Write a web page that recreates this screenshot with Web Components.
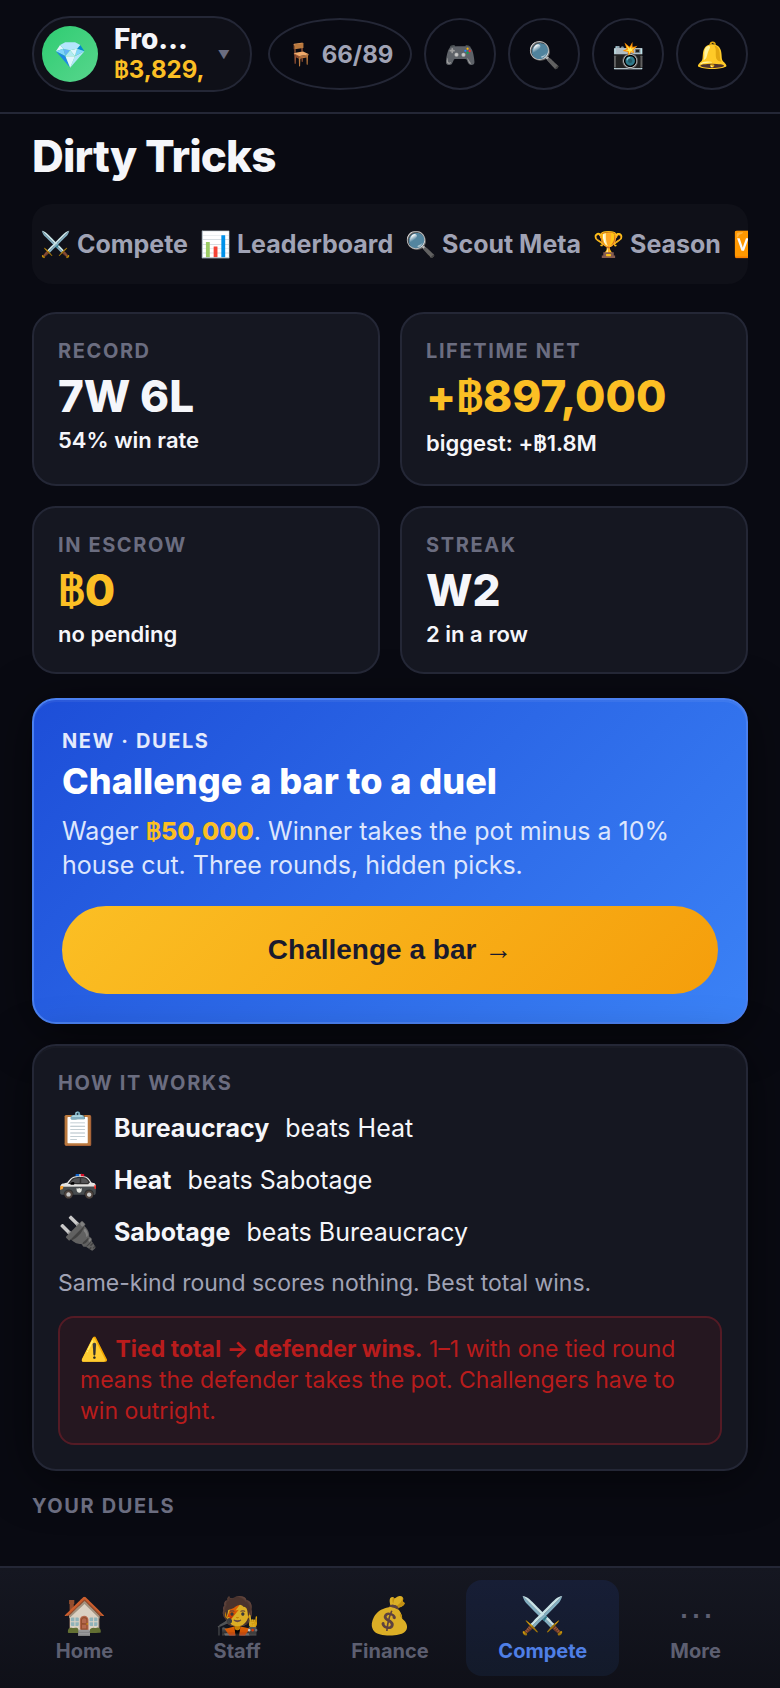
<!DOCTYPE html>
<html lang="en">
<head>
  <meta charset="UTF-8">
  <meta name="viewport" content="width=device-width,initial-scale=1">
  <title>Dirty Tricks</title>
  <style>
    :root {
      --bg: #090a12;
      --card: #151721;
      --line: #242736;
      --text: #f5f6fa;
      --soft: #a0a3b5;
      --muted: #6b6d80;
      --gold: #fbbf24;
    }

    body {
      margin: 0;
      background: var(--bg);
      color: var(--text);
      font-family: Inter, "Liberation Sans", sans-serif;
      font-size: 25px;
    }
  </style>
</head>
<body>
  <bar-app>
    <top-bar slot="top" name="Fro…" cash="฿3,829," seats="66/89"></top-bar>

    <h1 slot="title">Dirty Tricks</h1>
    <tab-strip>
      <a href="#compete">⚔️ Compete</a>
      <a href="#leaderboard">📊 Leaderboard</a>
      <a href="#scout">🔍 Scout Meta</a>
      <a href="#season">🏆 Season</a>
      <a href="#versus">🆚</a>
    </tab-strip>

    <stat-grid>
      <stat-card label="Record" value="7W 6L" sub="54% win rate"></stat-card>
      <stat-card label="Lifetime net" value="+฿897,000" sub="biggest: +฿1.8M" gold></stat-card>
      <stat-card label="In escrow" value="฿0" sub="no pending" gold></stat-card>
      <stat-card label="Streak" value="W2" sub="2 in a row"></stat-card>
    </stat-grid>

    <duel-card>
      <span slot="label">New · Duels</span>
      <span slot="title">Challenge a bar to a duel</span>
      Wager <b><baht-sign>฿</baht-sign>50,000</b>. Winner takes the pot minus a 10% house cut. Three rounds, hidden picks.
      <span slot="action">Challenge a bar →</span>
    </duel-card>

    <rules-card>
      <rule-row icon="📋" kind="Bureaucracy">beats Heat</rule-row>
      <rule-row icon="🚓" kind="Heat">beats Sabotage</rule-row>
      <rule-row icon="🔌" kind="Sabotage">beats Bureaucracy</rule-row>
      <span slot="note">Same-kind round scores nothing. Best total wins.</span>
      <span slot="warning">⚠️ <b>Tied total → defender wins.</b> 1–1 with one tied round means the defender takes the pot. Challengers have to win outright.</span>
    </rules-card>

    <section-label>Your duels</section-label>

    <bottom-nav slot="nav">
      <nav-item icon="🏠" href="#home">Home</nav-item>
      <nav-item icon="🧑‍🎤" href="#staff">Staff</nav-item>
      <nav-item icon="💰" href="#finance">Finance</nav-item>
      <nav-item icon="⚔️" href="#compete" active>Compete</nav-item>
      <nav-item icon="⋯" href="#more">More</nav-item>
    </bottom-nav>
  </bar-app>

  <script>
    // Small helper: registers an element whose shadow root comes from a string
    const define = (name, render) => {
      customElements.define(name, class extends HTMLElement {
        constructor() {
          super()
          this.attachShadow({ mode: "open" })
        }

        connectedCallback() {
          this.shadowRoot.innerHTML = render(this)
        }
      })
    }

    const attr = (el, name) => el.getAttribute(name) || ""
    const money = (el, name) => attr(el, name).replace("฿", "<baht-sign>฿</baht-sign>")

    // The currency sign is set in a Thai face, narrower than Inter's own.
    // Kept on one line: it is inline, so a line break would show as a space.
    define("baht-sign", () => `<style>:host { font-family: Loma, "Noto Sans", sans-serif }</style><slot></slot>`)

    define("bar-app", () => `
      <style>
        :host {
          display: flex;
          flex-direction: column;
          min-height: 100vh;
        }
        main {
          flex: 1;
          padding: 16px 32px 24px;
        }
        ::slotted(h1) {
          margin: 0 0 22px;
          font-size: 44px;
          font-weight: 800;
          line-height: 52px;
          letter-spacing: -0.02em;
        }
      </style>
      <slot name="top"></slot>
      <main><slot name="title"></slot><slot></slot></main>
      <slot name="nav"></slot>
    `)

    define("top-bar", el => `
      <style>
        :host {
          display: flex;
          align-items: center;
          gap: 12px;
          padding: 16px 32px 20px;
          border-bottom: 2px solid var(--line);
        }
        button {
          box-sizing: border-box;
          flex: none;
          margin: 0;
          border: 2px solid var(--line);
          background: none;
          color: inherit;
          font: inherit;
        }
        .profile {
          display: flex;
          flex: 1;
          align-items: center;
          gap: 16px;
          height: 76px;
          min-width: 0;
          margin-right: 4px;
          padding: 0 20px 0 8px;
          border-radius: 38px;
          background: #0f1018;
          text-align: left;
        }
        .avatar {
          display: grid;
          flex: none;
          place-items: center;
          width: 56px;
          height: 56px;
          border-radius: 50%;
          background: linear-gradient(135deg, #2ecc71, #58d68d);
          font-size: 26px;
        }
        .who {
          flex: 1;
          min-width: 0;
          white-space: nowrap;
        }
        .name {
          font-size: 28px;
          font-weight: 800;
          line-height: 32px;
        }
        .cash {
          color: var(--gold);
          font-size: 24px;
          font-weight: 700;
          line-height: 30px;
        }
        .caret {
          color: var(--muted);
          font-size: 12px;
        }
        .seats {
          display: flex;
          align-items: center;
          justify-content: center;
          gap: 8px;
          width: 144px;
          height: 72px;
          padding: 0;
          border-radius: 50%;
          color: var(--soft);
          font-size: 24px;
          font-weight: 700;
        }
        .chair {
          font-size: 22px;
        }
        .round {
          width: 72px;
          height: 72px;
          padding: 0;
          border-radius: 50%;
          font-size: 26px;
        }
      </style>
      <button class="profile">
        <span class="avatar">💎</span>
        <span class="who">
          <div class="name">${attr(el, "name")}</div>
          <div class="cash">${money(el, "cash")}</div>
        </span>
        <span class="caret">▼</span>
      </button>
      <button class="seats"><span class="chair">🪑</span><span>${attr(el, "seats")}</span></button>
      <button class="round" aria-label="Games">🎮</button>
      <button class="round" aria-label="Search">🔍</button>
      <button class="round" aria-label="Snapshot">📸</button>
      <button class="round" aria-label="Alerts">🔔</button>
    `)

    define("tab-strip", () => `
      <style>
        :host {
          display: flex;
          align-items: center;
          gap: 12px;
          box-sizing: border-box;
          height: 80px;
          margin-bottom: 28px;
          padding: 0 8px;
          overflow: hidden;
          border-radius: 20px;
          background: #0f1018;
        }
        ::slotted(a) {
          flex: none;
          color: var(--soft);
          font-weight: 700;
          text-decoration: none;
          white-space: nowrap;
        }
      </style>
      <slot></slot>
    `)

    define("section-label", () => `
      <style>
        :host {
          display: block;
          color: var(--muted);
          font-size: 20px;
          font-weight: 700;
          line-height: 26px;
          letter-spacing: 0.08em;
          text-transform: uppercase;
        }
      </style>
      <slot></slot>
    `)

    define("stat-grid", () => `
      <style>
        :host {
          display: grid;
          grid-template-columns: 1fr 1fr;
          gap: 20px;
          margin-bottom: 24px;
        }
      </style>
      <slot></slot>
    `)

    define("stat-card", el => `
      <style>
        :host {
          padding: 24px;
          border: 2px solid var(--line);
          border-radius: 24px;
          background: var(--card);
        }
        .value {
          margin: 6px 0 4px;
          font-size: 44px;
          font-weight: 800;
          line-height: 53px;
        }
        :host([gold]) .value { color: var(--gold) }
        .sub {
          font-size: 22px;
          font-weight: 600;
          line-height: 27px;
        }
        .sub baht-sign { line-height: 33px }
      </style>
      <section-label>${attr(el, "label")}</section-label>
      <div class="value">${money(el, "value")}</div>
      <div class="sub">${money(el, "sub")}</div>
    `)

    define("duel-card", () => `
      <style>
        :host {
          display: block;
          margin-bottom: 20px;
          padding: 28px;
          border: 2px solid #4a80f0;
          border-radius: 24px;
          background: linear-gradient(135deg, #1d4ed8, #3b82f6);
          box-shadow: 0 8px 48px rgba(0, 0, 0, 0.5), inset 0 2px 0 rgba(255, 255, 255, 0.06);
        }
        section-label {
          color: #e4eafc;
        }
        h2 {
          margin: 6px 0 12px;
          color: #fff;
          font-size: 36px;
          font-weight: 800;
          line-height: 42px;
        }
        p {
          margin: 0 0 24px;
          color: #dde6fd;
          line-height: 34px;
        }
        ::slotted(b) {
          color: var(--gold);
          font-weight: 800;
        }
        button {
          display: block;
          width: 100%;
          height: 88px;
          border: 0;
          border-radius: 44px;
          background: linear-gradient(135deg, #fbbf24, #f59e0b);
          color: #1a1a2e;
          font: 700 28px "Liberation Sans", sans-serif;
        }
      </style>
      <section-label><slot name="label"></slot></section-label>
      <h2><slot name="title"></slot></h2>
      <p><slot></slot></p>
      <button><slot name="action"></slot></button>
    `)

    define("rules-card", () => `
      <style>
        :host {
          display: block;
          margin-bottom: 22px;
          padding: 24px;
          border: 2px solid var(--line);
          border-radius: 24px;
          background: var(--card);
          box-shadow: 0 8px 48px rgba(0, 0, 0, 0.5), inset 0 2px 0 rgba(255, 255, 255, 0.02);
        }
        .rules {
          display: grid;
          gap: 12px;
          margin: 12px 0 14px;
        }
        p { margin: 0 }
        .note {
          color: var(--soft);
          font-size: 23px;
          line-height: 34px;
        }
        .warning {
          margin-top: 16px;
          padding: 16px 20px;
          border: 2px solid #541b25;
          border-radius: 16px;
          background: #251720;
          color: #b91c1c;
          font-size: 23px;
          line-height: 31px;
        }
      </style>
      <section-label>How it works</section-label>
      <div class="rules"><slot></slot></div>
      <p class="note"><slot name="note"></slot></p>
      <p class="warning"><slot name="warning"></slot></p>
    `)

    define("rule-row", el => `
      <style>
        :host {
          display: flex;
          align-items: center;
          gap: 16px;
          height: 40px;
        }
        .icon {
          display: flex;
          justify-content: center;
          width: 40px;
          font-size: 32px;
        }
        b { font-weight: 700 }
      </style>
      <span class="icon">${attr(el, "icon")}</span>
      <b>${attr(el, "kind")}</b>
      <span><slot></slot></span>
    `)

    define("bottom-nav", () => `
      <style>
        :host {
          position: sticky;
          bottom: 0;
          display: block;
          border-top: 2px solid var(--line);
          background: linear-gradient(#151721, #0f1018);
        }
        nav {
          display: grid;
          grid-template-columns: repeat(5, 1fr);
          padding: 12px 8px;
        }
      </style>
      <nav><slot></slot></nav>
    `)

    define("nav-item", el => `
      <style>
        :host { display: block }
        a {
          display: flex;
          flex-direction: column;
          align-items: center;
          justify-content: center;
          gap: 2px;
          height: 96px;
          border-radius: 16px;
          color: var(--muted);
          font-size: 20px;
          font-weight: 700;
          line-height: 24px;
          text-decoration: none;
          opacity: 0.85;
        }
        .icon {
          font-size: 36px;
          font-weight: 400;
          line-height: 44px;
        }
        :host([active]) a {
          background: linear-gradient(#171e36, #131a2a);
          color: #4f7fe6;
          opacity: 1;
        }
      </style>
      <a href="${attr(el, "href")}">
        <span class="icon">${attr(el, "icon")}</span>
        <span><slot></slot></span>
      </a>
    `)
  </script>
</body>
</html>
